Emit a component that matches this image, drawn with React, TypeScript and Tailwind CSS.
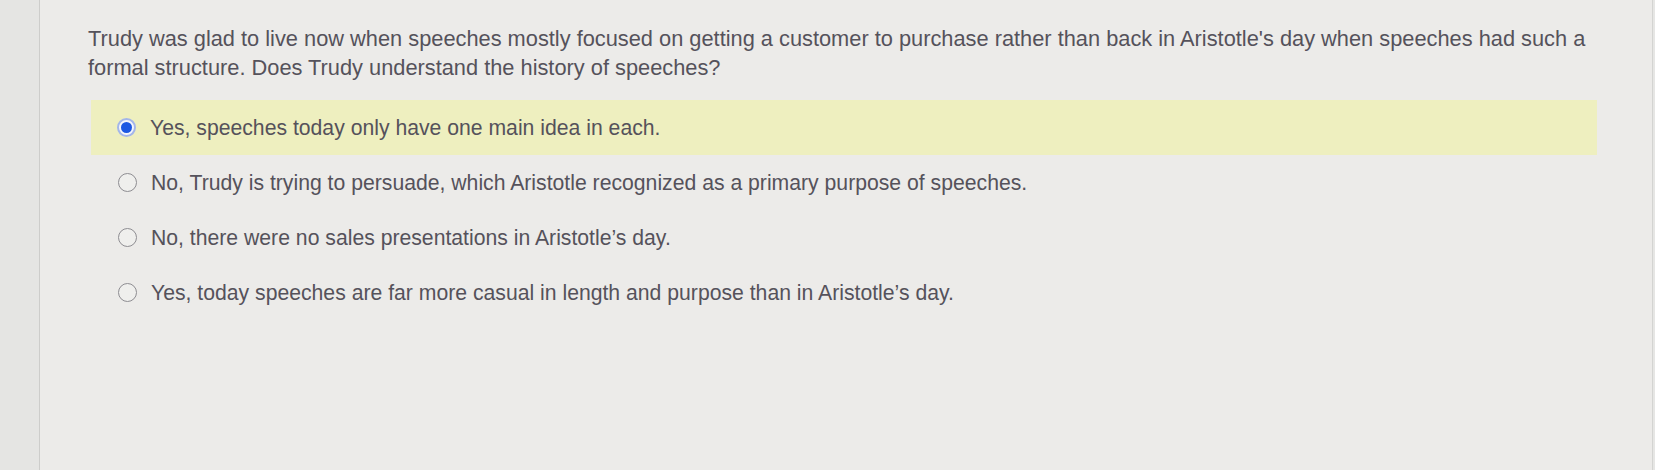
import React from "react";

const options = [
  "Yes, speeches today only have one main idea in each.",
  "No, Trudy is trying to persuade, which Aristotle recognized as a primary purpose of speeches.",
  "No, there were no sales presentations in Aristotle\u2019s day.",
  "Yes, today speeches are far more casual in length and purpose than in Aristotle\u2019s day.",
];

function Radio({ checked }: { checked: boolean }) {
  if (checked) {
    return (
      <span className="w-[19px] h-[19px] rounded-full border-[2px] border-[#a3b6ea] bg-[#f4f5fb] flex items-center justify-center shrink-0">
        <span className="w-[11px] h-[11px] rounded-full bg-[#1d58e2]" />
      </span>
    );
  }
  return (
    <span className="w-[19px] h-[19px] rounded-full border-[1.5px] border-[#8e8d92] bg-[#efefed] shrink-0" />
  );
}

export default function App() {
  return (
    <div
      className="w-[1655px] h-[470px] bg-[#ecebe9] flex overflow-hidden"
      style={{ fontFamily: '"Liberation Sans", Arial, sans-serif' }}
    >
      <div className="w-[40px] h-full bg-[#e5e5e3] border-r border-[#cdcdcb] shrink-0" />
      <div className="flex-1 pl-[48px] pt-[24px] text-[#55525b]">
        <p className="text-[21.8px] leading-[29px] w-[1512px]">
          Trudy was glad to live now when speeches mostly focused on getting a customer to purchase rather than back in Aristotle's day when speeches had such a formal structure. Does Trudy understand the history of speeches?
        </p>
        <div className="mt-[18px] ml-[3px] w-[1506px] flex flex-col">
          {options.map((o, i) => (
            <div
              key={i}
              className={
                i === 0
                  ? "h-[55px] flex items-center pl-[26px] gap-[14px] bg-[#eeefbf]"
                  : "h-[55px] flex items-center pl-[27px] gap-[14px]"
              }
            >
              <Radio checked={i === 0} />
              <span className="text-[21.2px] leading-[24px]">{o}</span>
            </div>
          ))}
        </div>
      </div>
      <div className="w-[3px] h-full border-l border-[#d4d4d2] bg-[#e6e6e4] shrink-0" />
    </div>
  );
}
